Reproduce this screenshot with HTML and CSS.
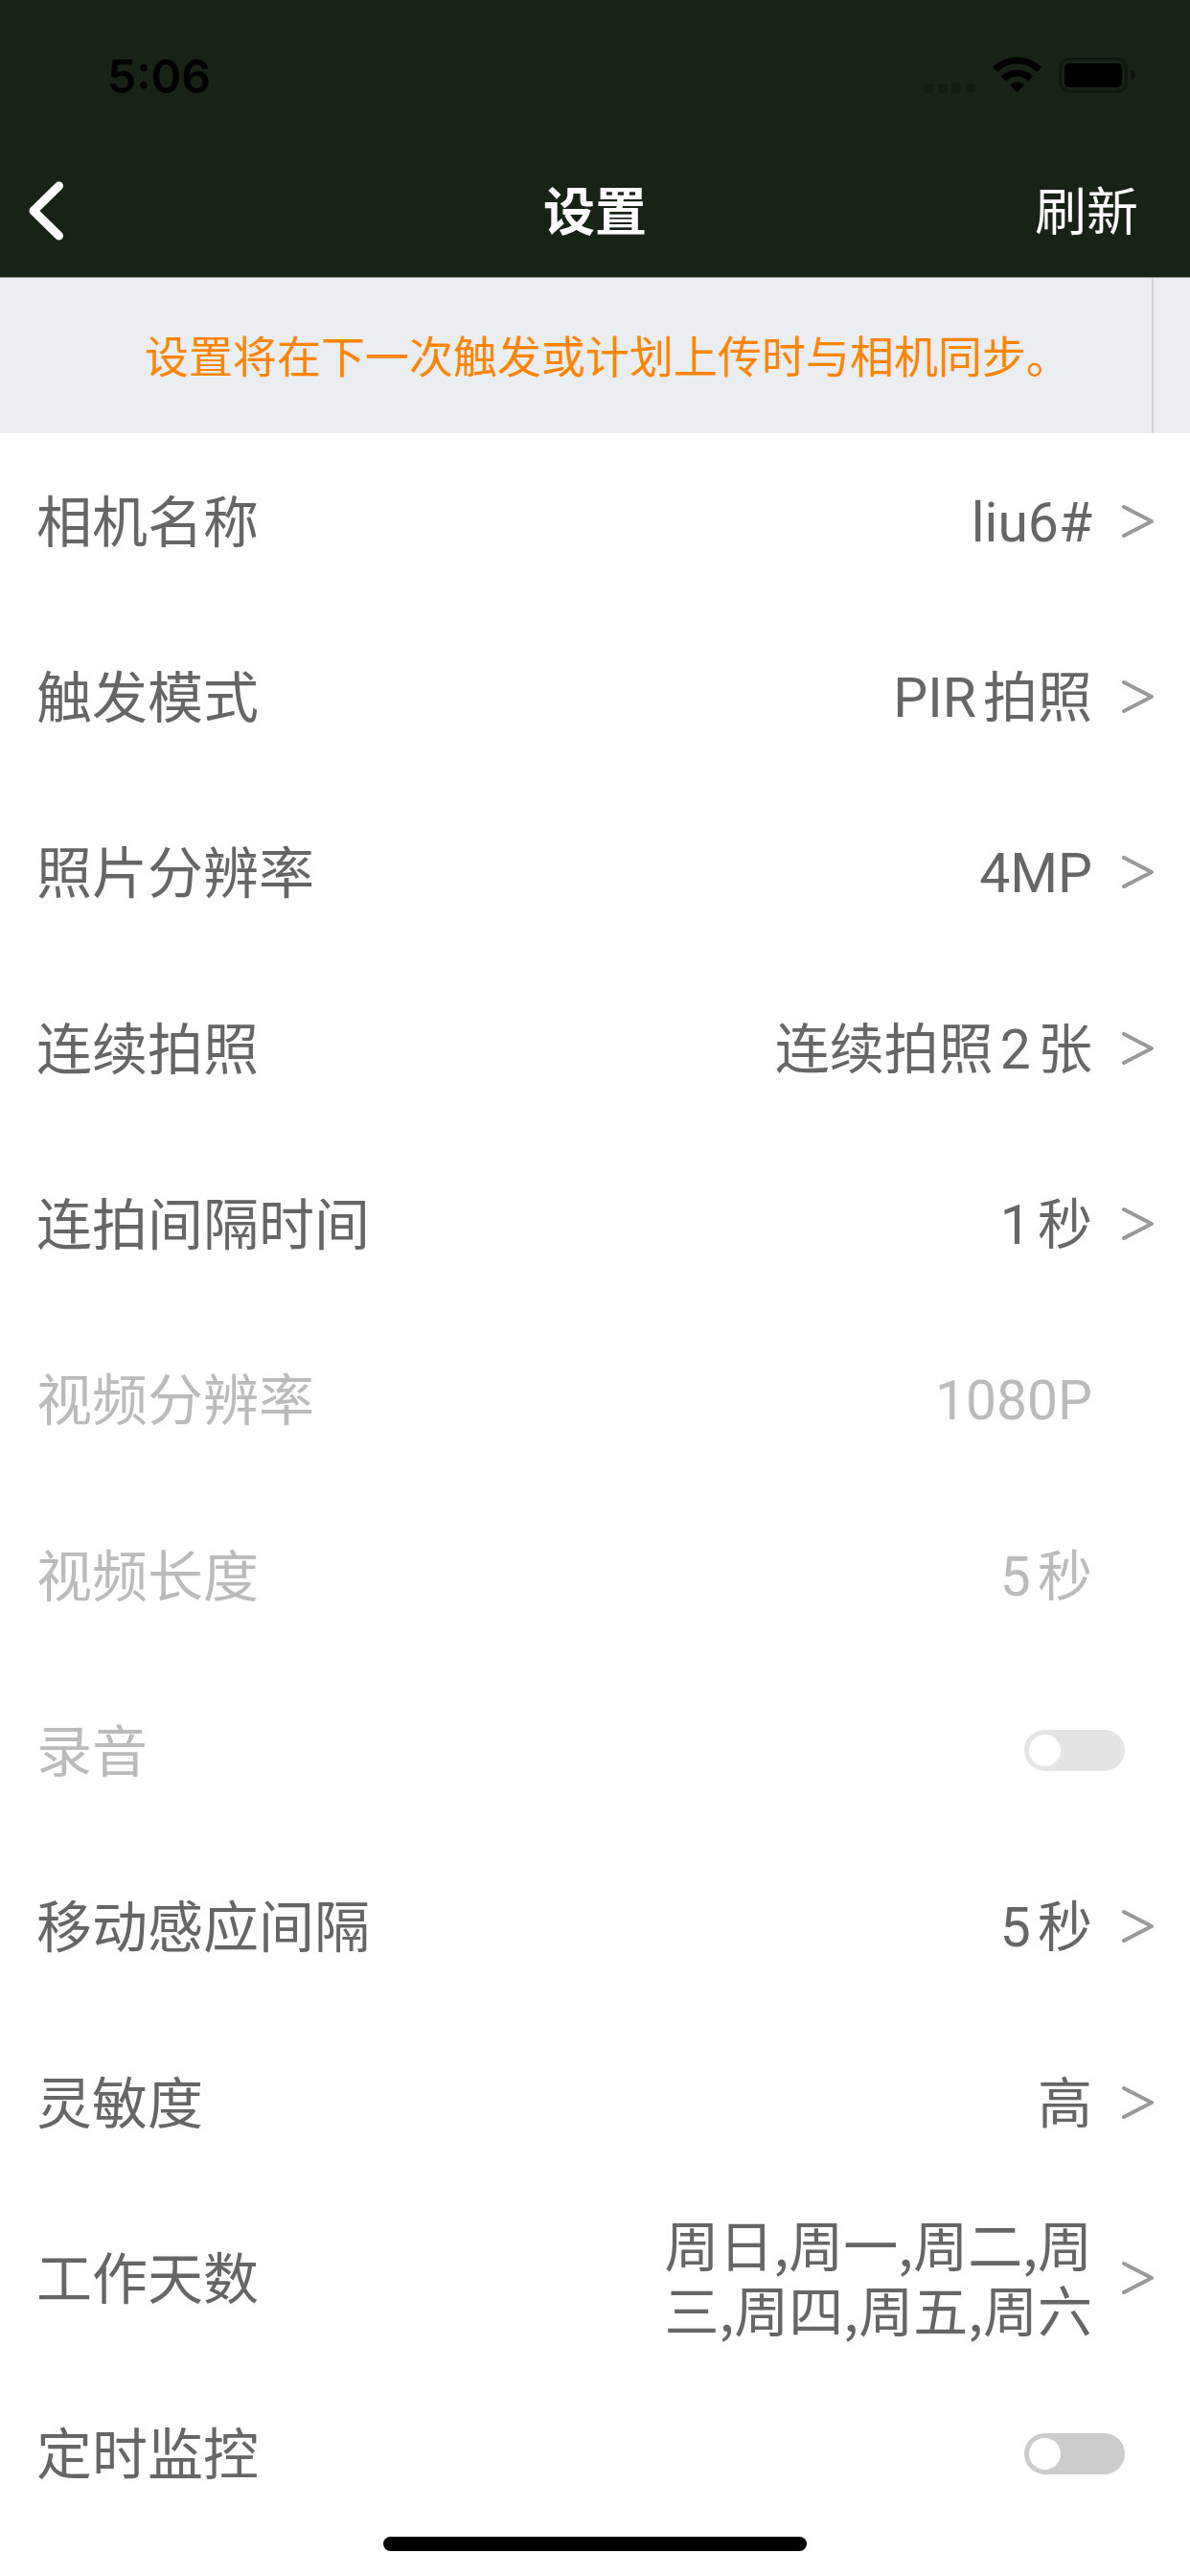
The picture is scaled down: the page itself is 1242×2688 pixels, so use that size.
FILE: index.html
```
<!DOCTYPE html>
<html lang="zh-CN">
<head>
    <meta charset="UTF-8">
    <meta name="viewport" content="width=device-width, initial-scale=1.0">
    <title>设置</title>
    <link rel="stylesheet" href="styles.css">
</head>
<body>
  <svg class="sprite" aria-hidden="true">
    <symbol id="arrow" viewBox="0 0 34 34">
      <path d="M2 2 L31 17 L2 32" fill="none" stroke="#999" stroke-width="4" stroke-linecap="round" stroke-linejoin="round"/>
    </symbol>
  </svg>

  <div class="app">
    <header class="header">
      <div class="status-bar">
        <time class="clock">5:06</time>
        <svg class="status-icons" width="222" height="40" viewBox="0 0 222 40" aria-hidden="true">
          <!-- no signal -->
          <g fill="#111c10">
            <rect x="1" y="28" width="10" height="10" rx="3"/>
            <rect x="16" y="28" width="10" height="10" rx="3"/>
            <rect x="30" y="28" width="10" height="10" rx="3"/>
            <rect x="45" y="28" width="10" height="10" rx="3"/>
          </g>
          <!-- wifi -->
          <path d="M73 11 A36 36 0 0 1 124 11 L119 16 A29 29 0 0 0 78 16 Z"/>
          <path d="M82 20.500 A23.500 23.500 0 0 1 115 20.500 L110 25.500 A16.500 16.500 0 0 0 87 25.500 Z"/>
          <path d="M91 29.500 A11 11 0 0 1 106 29.500 L98.500 37.500 Z"/>
          <!-- battery -->
          <rect x="143.500" y="2.500" width="69" height="34" rx="10" fill="none" stroke="#0e180d" stroke-width="3"/>
          <rect x="148" y="7" width="60" height="25" rx="5"/>
          <path d="M217 14 C220 15 222 17 222 19.500 C222 22 220 24 217 25 Z" fill="#0b130a"/>
        </svg>
      </div>
      <div class="nav-bar">
        <button class="back-btn" aria-label="返回">
          <svg width="38" height="64" viewBox="0 0 38 64" aria-hidden="true">
            <path d="M32.500 6 L6 32 L32.500 58" fill="none" stroke="#fff" stroke-width="9" stroke-linecap="round" stroke-linejoin="round"/>
          </svg>
        </button>
        <h1>设置</h1>
        <button class="refresh-btn">刷新</button>
      </div>
    </header>

    <div class="notice">
      <p>设置将在下一次触发或计划上传时与相机同步。</p>
    </div>

    <main class="settings">
      <button class="row">
        <span class="label">相机名称</span>
        <span class="value">liu6#</span>
        <svg class="arrow" aria-hidden="true"><use href="#arrow"/></svg>
      </button>
      <button class="row">
        <span class="label">触发模式</span>
        <span class="value">PIR拍照</span>
        <svg class="arrow" aria-hidden="true"><use href="#arrow"/></svg>
      </button>
      <button class="row">
        <span class="label">照片分辨率</span>
        <span class="value">4MP</span>
        <svg class="arrow" aria-hidden="true"><use href="#arrow"/></svg>
      </button>
      <button class="row">
        <span class="label">连续拍照</span>
        <span class="value">连续拍照2张</span>
        <svg class="arrow" aria-hidden="true"><use href="#arrow"/></svg>
      </button>
      <button class="row">
        <span class="label">连拍间隔时间</span>
        <span class="value">1秒</span>
        <svg class="arrow" aria-hidden="true"><use href="#arrow"/></svg>
      </button>
      <button class="row no-arrow" disabled>
        <span class="label">视频分辨率</span>
        <span class="value">1080P</span>
      </button>
      <button class="row no-arrow" disabled>
        <span class="label">视频长度</span>
        <span class="value">5秒</span>
      </button>
      <div class="row no-arrow disabled">
        <label class="label" for="record-audio">录音</label>
        <input class="switch" type="checkbox" role="switch" id="record-audio" disabled>
      </div>
      <button class="row">
        <span class="label">移动感应间隔</span>
        <span class="value">5秒</span>
        <svg class="arrow" aria-hidden="true"><use href="#arrow"/></svg>
      </button>
      <button class="row">
        <span class="label">灵敏度</span>
        <span class="value">高</span>
        <svg class="arrow" aria-hidden="true"><use href="#arrow"/></svg>
      </button>
      <button class="row">
        <span class="label">工作天数</span>
        <span class="value days">周日,周一,周二,周三,周四,周五,周六</span>
        <svg class="arrow" aria-hidden="true"><use href="#arrow"/></svg>
      </button>
      <div class="row no-arrow">
        <label class="label" for="timer">定时监控</label>
        <input class="switch" type="checkbox" role="switch" id="timer">
      </div>
    </main>
  </div>

  <div class="home-indicator"></div>
</body>
</html>
```
FILE: styles.css
```
* {
    margin: 0;
    padding: 0;
    box-sizing: border-box;
}

body {
    font-family: Roboto, "Noto Sans CJK SC", sans-serif;
    text-autospace: normal;
    background: #fff;
    color: #666;
}

button {
    border: none;
    background: none;
    font: inherit;
    color: inherit;
    cursor: pointer;
}

.sprite {
    display: none;
}

.app {
    min-height: 100vh;
    display: flex;
    flex-direction: column;
}

/* Header */
.header {
    background: #172415;
    border-bottom: 1px solid #8b908b;
}

.status-bar {
    height: 150px;
    padding: 8px 57px 0 112px;
    display: flex;
    align-items: center;
    justify-content: space-between;
}

.clock {
    font-family: Inter, sans-serif;
    font-size: 48px;
    font-weight: 600;
    color: #000;
}

.nav-bar {
    height: 139px;
    padding: 0 54px;
    display: grid;
    grid-template-columns: 1fr auto 1fr;
    align-items: center;
    color: #fff;
    font-size: 54px;
}

.nav-bar h1 {
    font-size: 54px;
    font-weight: 700;
}

.nav-bar h1,
.refresh-btn {
    padding-bottom: 5px;
}

.back-btn {
    justify-self: start;
    display: flex;
    margin-left: -25px;
}

.refresh-btn {
    justify-self: end;
}

/* Sync notice */
.notice {
    height: 162px;
    background: #eaeef1;
    padding-right: 38px;
    display: flex;
}

.notice p {
    flex: 1;
    display: flex;
    align-items: center;
    justify-content: center;
    padding: 0 0 4px 66px;
    border-right: 2px solid #d2d5d8;
    font-size: 46px;
    color: #ff8500;
}

/* Settings list */
.settings {
    flex: 1;
    display: grid;
    grid-auto-rows: 1fr;
    padding-bottom: 36px;
}

.row {
    width: 100%;
    padding: 0 37px 0 38px;
    display: flex;
    align-items: center;
    font-size: 58px;
    line-height: 68px;
}

.label {
    flex: 1;
    padding-top: 4px;
    text-align: left;
}

.value {
    max-width: 460px;
    padding-top: 4px;
    font-size: 57px;
    text-align: right;
}

.days {
    padding: 0 0 6px;
    font-family: "Noto Sans CJK SC", sans-serif;
    text-autospace: no-autospace;
}

.arrow {
    width: 34px;
    height: 34px;
    margin-left: 31px;
}

.no-arrow {
    padding-right: 102px;
}

.row:disabled,
.row.disabled {
    color: #bbb;
    cursor: default;
}

.switch {
    appearance: none;
    width: 105px;
    height: 43px;
    margin-right: -34px;
    padding: 5px;
    border-radius: 22px;
    background: #ccc;
    cursor: pointer;
}

.switch::before {
    content: "";
    display: block;
    width: 33px;
    height: 33px;
    border-radius: 50%;
    background: #fff;
}

.switch:checked {
    background: #4cd964;
}

.switch:checked::before {
    margin-left: auto;
}

.switch:disabled {
    background: #e4e4e4;
}

.home-indicator {
    position: fixed;
    left: 50%;
    bottom: 26px;
    width: 442px;
    height: 15px;
    transform: translateX(-50%);
    border-radius: 8px;
    background: #000;
}
```
